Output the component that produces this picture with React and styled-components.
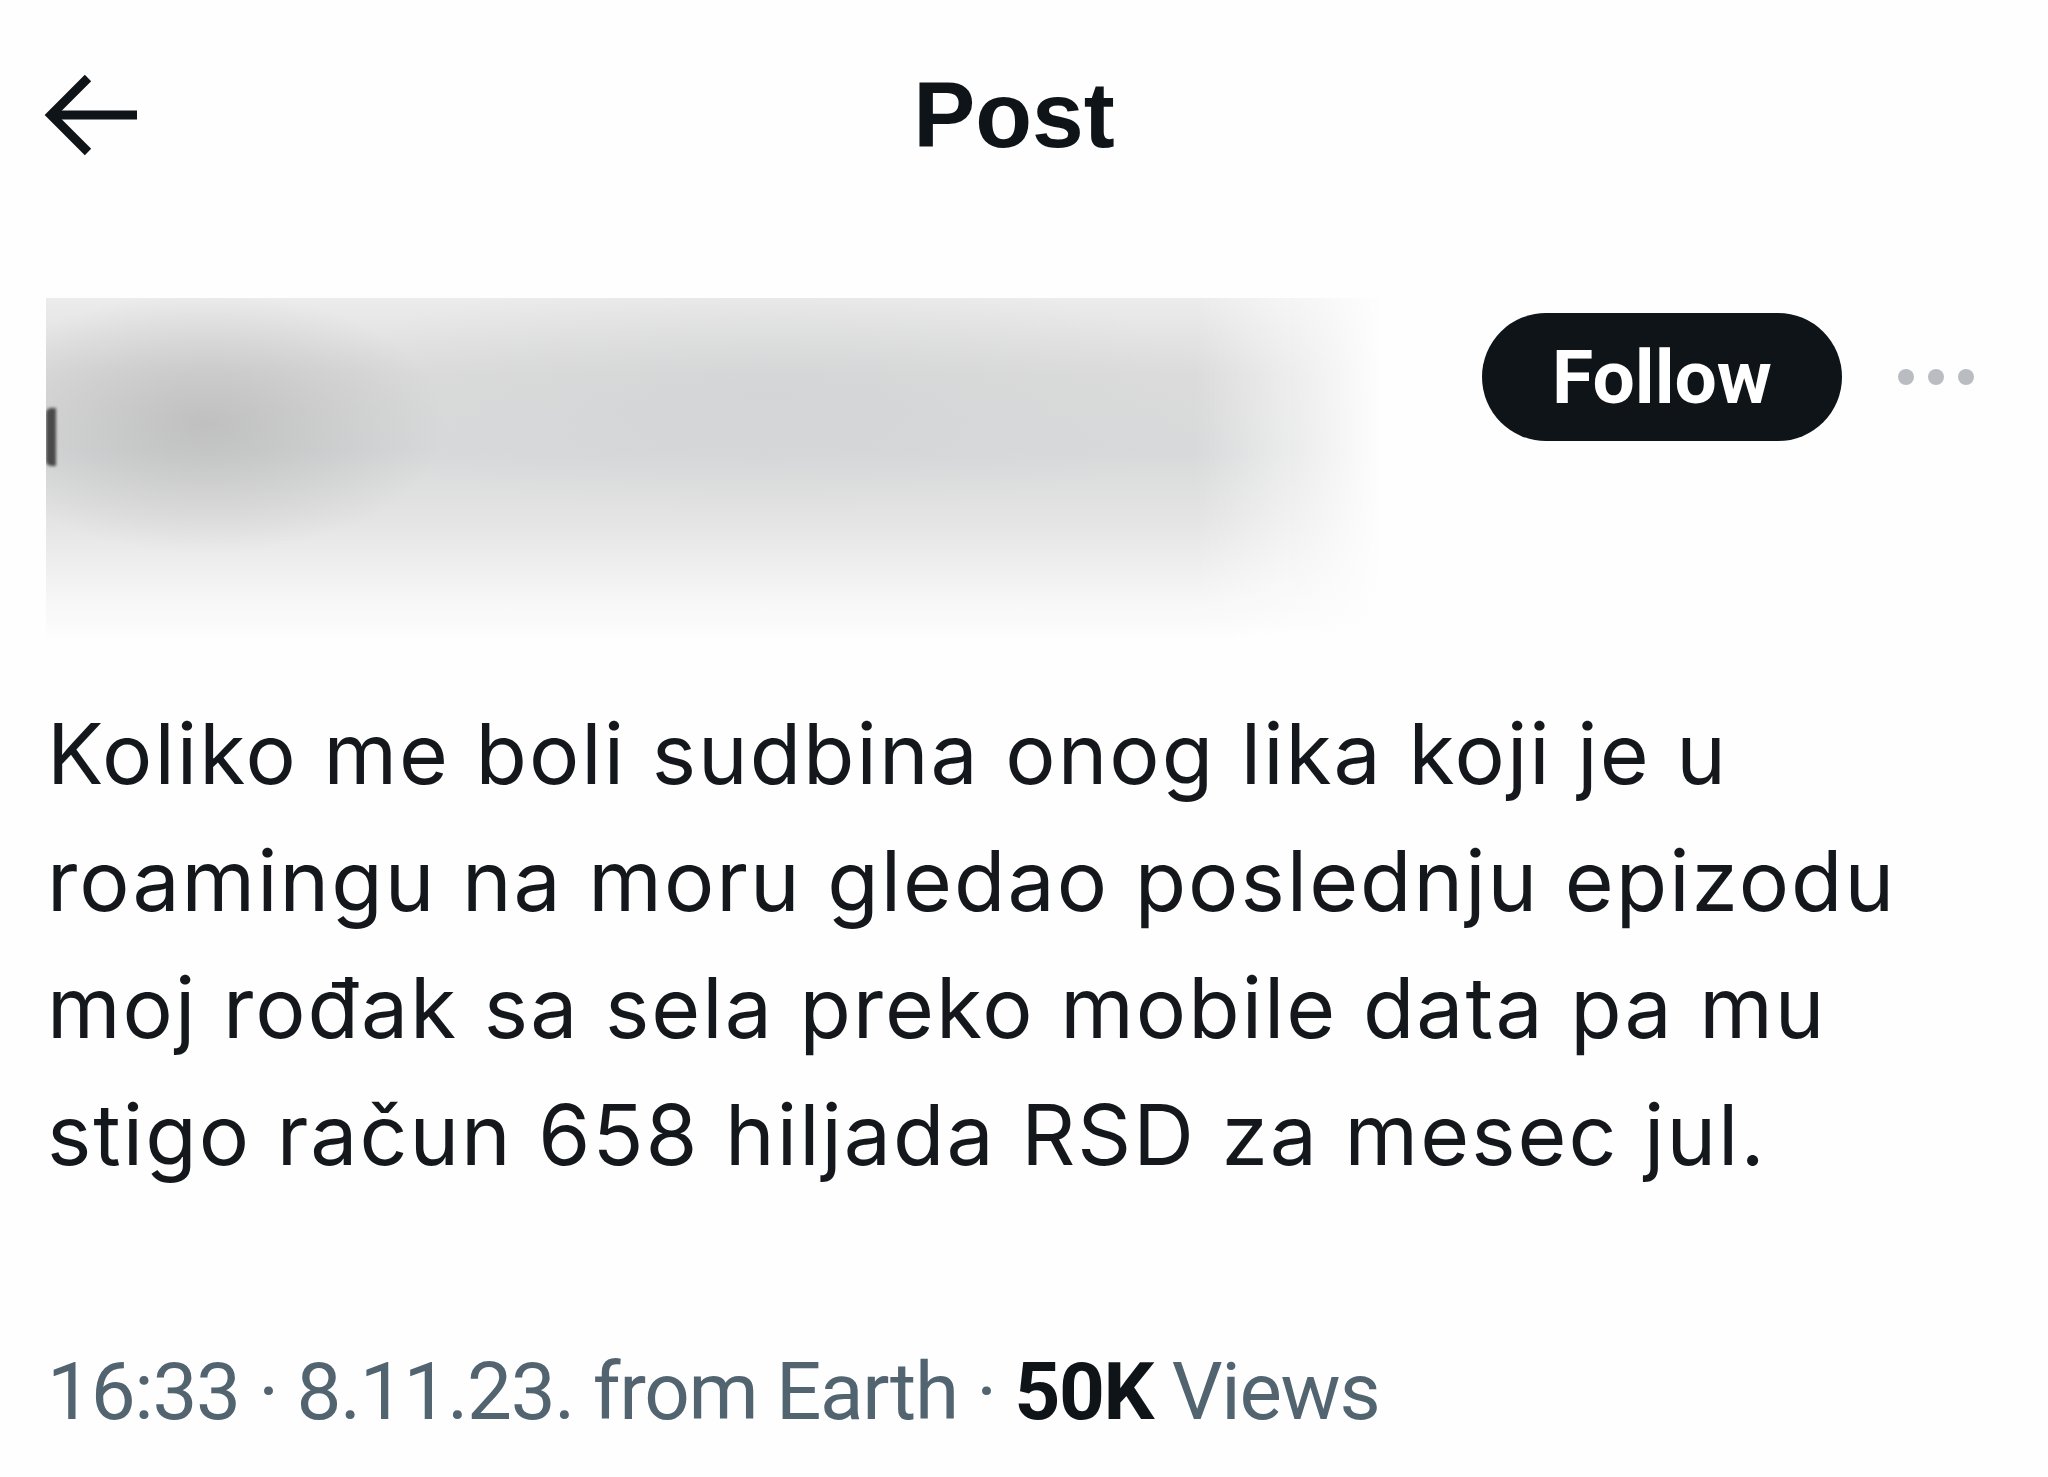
import React from 'react';
import styled, { createGlobalStyle } from 'styled-components';

const Global = createGlobalStyle`
  html, body {
    margin: 0;
    padding: 0;
    background: #fefefe;
  }
  body {
    font-family: Inter, "Liberation Sans", sans-serif;
    color: #0f1419;
  }
`;

const Page = styled.div`
  width: 2048px;
  height: 1477px;
  overflow: hidden;
`;

// 상단 헤더
const Header = styled.header`
  height: 230px;
  display: grid;
  grid-template-columns: 1fr auto 1fr;
  align-items: center;
`;

const BackButton = styled.div`
  padding-left: 43px;
  display: flex;
  align-items: center;
`;

const Title = styled.h1`
  margin: 0 20px 0 0;
  font-family: "Liberation Sans", Arial, sans-serif;
  font-size: 93px;
  line-height: 1;
  font-weight: 700;
  color: #0f1419;
`;

// 작성자 줄 (블러 처리)
const AuthorRow = styled.div`
  margin-top: 68px;
  height: 342px;
  display: flex;
  align-items: flex-start;
`;

const Blurred = styled.div`
  position: relative;
  margin-left: 46px;
  width: 1338px;
  height: 342px;
  background:
    radial-gradient(ellipse 240px 130px at 160px 125px, rgba(170, 170, 170, 0.55), rgba(170, 170, 170, 0) 100%),
    radial-gradient(ellipse 460px 120px at 720px 95px, rgba(205, 207, 209, 0.5), rgba(205, 207, 209, 0) 100%),
    linear-gradient(to bottom, #ececec 0%, #dcdcdc 22%, #d8d9da 45%, #e4e4e4 65%, #f3f3f3 84%, rgba(254, 254, 254, 0) 100%);
  -webkit-mask-image: linear-gradient(to right, #000 0%, #000 86%, transparent 100%);
  mask-image: linear-gradient(to right, #000 0%, #000 86%, transparent 100%);
`;

const AvatarEdge = styled.span`
  position: absolute;
  left: 0;
  top: 110px;
  width: 10px;
  height: 58px;
  border-radius: 5px 0 0 5px;
  background: #4a4a4a;
  filter: blur(1.5px);
`;

const Actions = styled.div`
  margin-top: 15px;
  margin-left: 98px;
  display: flex;
  align-items: center;
  gap: 56px;
`;

const FollowButton = styled.button`
  width: 360px;
  height: 128px;
  border: none;
  border-radius: 64px;
  background: #0f1419;
  color: #fff;
  font-family: Roboto, "Liberation Sans", sans-serif;
  font-size: 75px;
  font-weight: 700;
  padding: 0;
`;

const More = styled.div`
  display: flex;
  gap: 14px;
`;

const Dot = styled.span`
  width: 16px;
  height: 16px;
  border-radius: 50%;
  background: #b9bdc1;
`;

// 본문
const Body = styled.p`
  margin: 50px 0 0;
  padding-left: 47px;
  font-size: 84px;
  line-height: 127px;
  letter-spacing: 2px;
  font-weight: 400;
  color: #14181c;
  white-space: nowrap;
`;

const Meta = styled.div`
  margin-top: 144px;
  padding-left: 47px;
  font-family: Roboto, Inter, sans-serif;
  font-size: 80px;
  line-height: 100px;
  letter-spacing: -1.3px;
  color: #536471;
  white-space: nowrap;
`;

const Strong = styled.span`
  font-weight: 700;
  color: #0f1419;
`;

function BackArrow() {
  return (
    <svg width="96" height="82" viewBox="0 0 96 82" fill="none">
      <path d="M94 41H8" stroke="#0f1419" strokeWidth="9" />
      <path d="M45 4L8 41l37 37" stroke="#0f1419" strokeWidth="9" />
    </svg>
  );
}

export default function App() {
  return (
    <>
      <Global />
      <Page>
        <Header>
          <BackButton>
            <BackArrow />
          </BackButton>
          <Title>Post</Title>
          <div />
        </Header>

        <AuthorRow>
          <Blurred>
            <AvatarEdge />
          </Blurred>
          <Actions>
            <FollowButton>Follow</FollowButton>
            <More>
              <Dot />
              <Dot />
              <Dot />
            </More>
          </Actions>
        </AuthorRow>

        <Body>
          Koliko me boli sudbina onog lika koji je u<br />
          roamingu na moru gledao poslednju epizodu<br />
          moj rođak sa sela preko mobile data pa mu<br />
          stigo račun 658 hiljada RSD za mesec jul.
        </Body>

        <Meta>
          16:33 · 8.11.23. from Earth · <Strong>50K</Strong> Views
        </Meta>
      </Page>
    </>
  );
}
